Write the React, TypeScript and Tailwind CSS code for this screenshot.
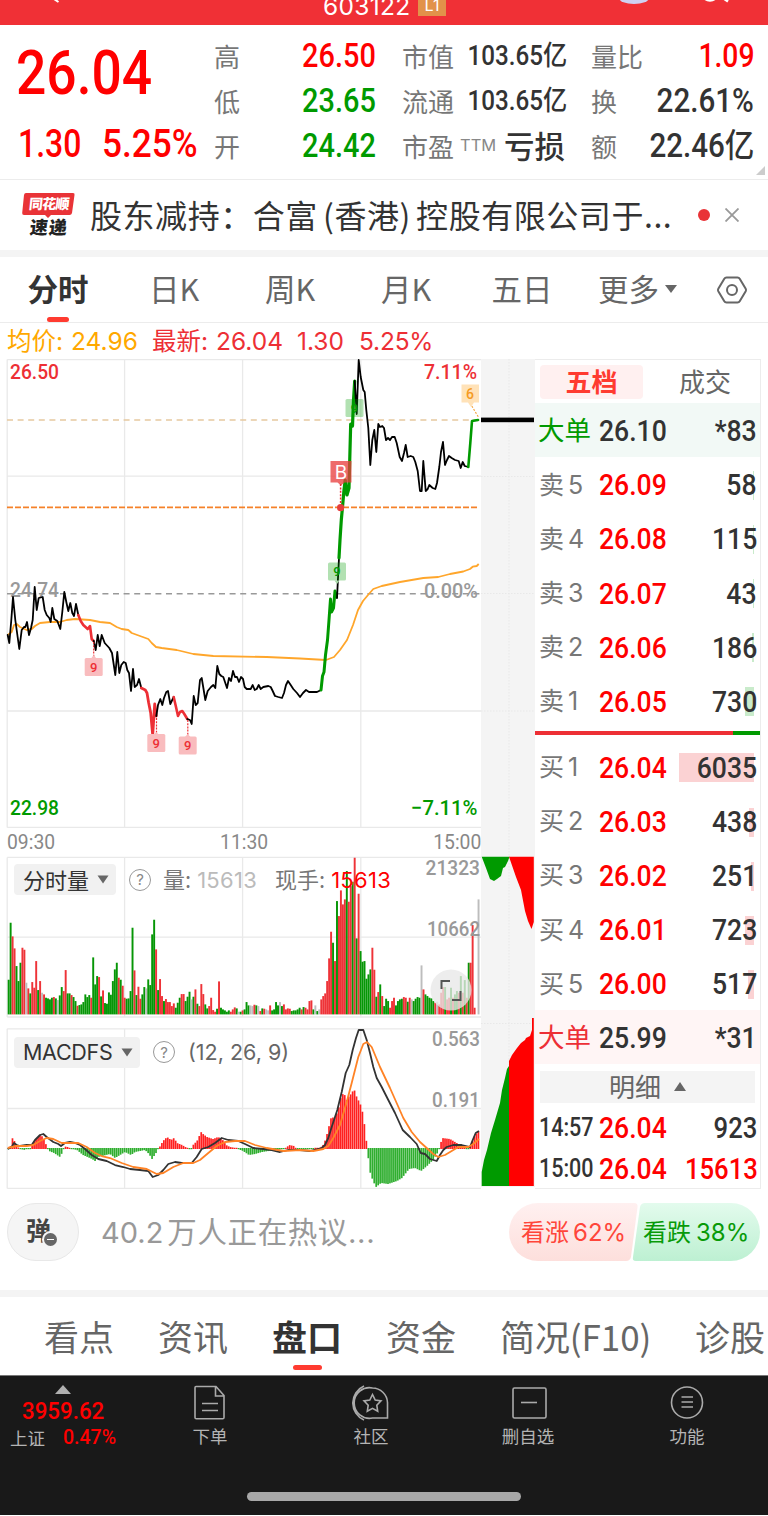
import React from 'react';

type Point = [number, number];

interface OrderRow {
  label: string;
  price: string;
  volume: string;
  depth: number;
}

const SELL_ROWS: OrderRow[] = [
  { label: '卖5', price: '26.09', volume: '58', depth: 1 },
  { label: '卖4', price: '26.08', volume: '115', depth: 1 },
  { label: '卖3', price: '26.07', volume: '43', depth: 1 },
  { label: '卖2', price: '26.06', volume: '186', depth: 2 },
  { label: '卖1', price: '26.05', volume: '730', depth: 9 }
];

const BUY_ROWS: OrderRow[] = [
  { label: '买1', price: '26.04', volume: '6035', depth: 75 },
  { label: '买2', price: '26.03', volume: '438', depth: 5 },
  { label: '买3', price: '26.02', volume: '251', depth: 3 },
  { label: '买4', price: '26.01', volume: '723', depth: 9 },
  { label: '买5', price: '26.00', volume: '517', depth: 6 }
];

const PERIODS = ['分时', '日K', '周K', '月K', '五日'];

// Price line, split into segments by signal colour
const PRICE_SEGMENTS: { color: string; width: number; points: string }[] = [
  {
    color: '#000',
    width: 1.8,
    points:
      '7.7,635 9.3,643 11.3,620 13,597 15.3,620 19.3,649 21.7,630 24,627 25.3,627 27,622 29,635 31,628 32.7,620 34.7,587 36.7,610 38.7,598 42.7,597 44.7,610 46.7,615 49.3,618 50.7,622 52.3,608 54.3,619 57.3,621 60.3,629 62.3,612 64.3,592 66.3,602 68.3,611 70.3,603 72.3,613 74,616 76,604 78.3,615'
  },
  { color: '#ed2f35', width: 2.6, points: '78.3,615 80.7,621 83.3,625 87.7,629 90,626 91.7,639 93.7,641' },
  {
    color: '#000',
    width: 1.8,
    points:
      '93.7,641 95.7,650 97.7,635 99.7,646 101.7,635 104.7,643 109.3,648 112,653 115.3,675 117.3,652 119.3,673 121.3,665 123.7,662 125.7,663 127.3,670 129,673 131,691 133,669 134.7,687 137,685 139,679 141.3,688'
  },
  { color: '#ed2f35', width: 2.8, points: '141.3,688 143.3,689 145.3,690 147,693 148.7,703 150.7,713 152.7,735 154.7,704 156.3,716' },
  { color: '#000', width: 1.8, points: '156.3,716 158,705 160.3,699 162.3,705 164,698 166.3,692 168,691 170.3,704 173.7,697' },
  { color: '#ed2f35', width: 2.6, points: '173.7,697 176,707 178,716 180,712 182.3,711 184.3,714 187.3,719' },
  {
    color: '#000',
    width: 1.8,
    points:
      '187.3,719 190,720 191.7,724 193.7,696 195.7,705 197.7,703 200,680 201.7,678 203.7,690 205.3,700 207.7,691 211,687 213.3,685 215.3,688 217.3,666 219.3,674 221.3,676 223.3,677 227,688 229,678 231,681 233,671 235,677 237,677 239,682 241,677 243,679 244.7,687 246.7,689 250.7,689 252.7,685 254.7,690 256.7,689 258.7,685 260.7,689 263.3,687 268.3,686 270.7,687 272.7,691 275,696 278.3,697 282,698 284,693 286,685 288,681 290.7,685 293.3,689 297,693 300,697 303,693 306,690 309,692 313,692 317,692 321,690'
  },
  {
    color: '#009a00',
    width: 3,
    points: '321,690 322.5,676 324,672 325.5,655 327.5,640 329,620 330.5,599 331.5,612 333.5,608 335,591 336.5,597'
  },
  { color: '#000', width: 1.8, points: '337,598 339,558' },
  {
    color: '#009a00',
    width: 3.2,
    points: '339,558 340,540 341.3,520 342.5,507 344,490 345.2,480 347,495 349,488 350,450 350.7,424 352.5,426 353.5,400 354.7,381'
  },
  {
    color: '#000',
    width: 1.8,
    points:
      '354.7,381 356.7,414 358.7,360 360.7,377 363.3,390 364.7,392 366.3,410 368.3,428 370.3,465 372.3,440 374.3,430 376.3,452 378.3,424 380,427 382.3,426 384,428 386,440 388,438 390,440 392,437 394.7,437 396.7,443 399.7,457 402,461 404,453 405.7,445 407.7,457 410.7,456 413.3,457 415.3,462 417.7,471 420,491 421.7,491 423.3,461 425.7,491 427.7,489 429.3,485 432.7,488 435.3,489 437,483 439.3,467 441,452 443,442 445,465 447,460 449,456 451.7,458 455,460 458.7,461 460.7,468 462.7,462 464.7,466 468.3,467'
  },
  { color: '#009a00', width: 2.6, points: '468.3,467 470.3,443 472,421 478,420' }
];

const AVG_LINE =
  '7.7,635 11.7,632 14,625 16.7,624 20,627 26.7,630 31.7,629 35,626 40,623 50,622 60,622 66.7,620 75,619 90,620 100,622 110,623 116.7,627 121.7,629 128.3,630 131.7,633 140,636 148.3,639 151.7,643 156,647 161.7,648 176.7,650 193.3,654 213.3,656 266.7,657 300,658.5 326,660 334,657 340,650 347,640 353,625 358,610 363,601 368,595 373.3,589 381.7,586 400,582 423.3,578 438.3,577 450,574 463.3,571.5 470,569 472.7,566.7 476.7,566 478.7,564';

// r = rising, g = falling, n = flat; the number is the bar height at 3x
const VOLUME_BARS = (
  'g104 g275 r234 r198 g145 g100 g155 r200 r194 n95 r78 g63 r97 r80 r160 g73 r100 n65 r60 g50 g48 g45 g50 r52 g48 n43 g57 g82 r70 r133 ' +
  'g63 g63 r58 g52 g40 r26 g28 g30 g37 g60 g52 g58 r50 g171 g90 g115 r112 g54 r72 g34 g32 g66 g59 g100 g135 g155 r110 g104 r86 r50 ' +
  'g47 g48 g70 g260 r132 g58 r83 r47 g60 g82 n78 g105 g88 g240 g284 r195 g73 r106 r55 g40 r46 r37 r37 r25 r33 g20 g35 g50 r61 r61 ' +
  'g40 g53 g68 n45 g53 r75 g32 r25 r91 r61 g30 g18 r25 r50 r13 r8 g17 r99 g20 g15 g12 g8 g12 r8 r15 r21 g18 n8 g8 r12 ' +
  'g15 g37 g27 n27 n25 r29 g27 n25 r10 g18 r17 n15 n12 r27 g12 g15 g37 g27 n37 g25 r30 r15 r18 r17 g10 g12 g12 g15 g20 r15 ' +
  'g22 r20 r15 r40 r42 g15 n27 g10 n15 r45 r55 r63 r100 r168 r248 g215 r160 g340 r295 r372 r330 r345 g430 r338 r385 g398 r470 g228 r362 g190 ' +
  'g158 g160 g107 g120 g135 r200 r134 g53 r67 g90 r55 g25 g47 g40 r20 r40 r50 g27 g40 g45 g47 r52 r50 g38 r50 n45 g40 g47 g52 g50 ' +
  'n147 r75 g60 g55 g50 g48 g40 r35 n38 r30 r65 r82 g82 r45 r50 g80 r50 g60 g70 r65 g115 r65 g103 r50 g155 r155 r268 r20 n0 n345'
).split(' ');

const VOLUME_COLORS: Record<string, string> = { r: '#ee3338', g: '#069606', n: '#bdbdbd' };

const MACD_HIST: Point[] = [
  [8, -1], [10, 1], [12.5, 11], [15, 7], [18, 2], [20, -1], [25, -2], [28, 0], [30, -1], [33, 6], [37, 11], [40, 14],
  [43, 12], [47, 2], [49, -3], [54, -5], [60, -9], [62, -5], [63, -1], [66, 3], [69, 1], [72, -1], [77, -2], [83, -7],
  [92, -11], [95, -13], [98, -9], [110, -6], [115, -10], [120, -7], [125, -4], [131, -7], [135, -4], [145, -2],
  [149, -6], [152, -11], [156, -5], [159, 1], [163, 8], [167, 12], [171, 9], [174, 11], [177, 6], [182, 4], [187, 1],
  [191, -1], [193, 4], [197, 8], [201, 17], [203, 15], [207, 12], [213, 10], [218, 12], [222, 10], [226, 4], [230, 2],
  [236, 1], [238, -1], [243, -3], [249, -7], [255, -6], [262, -4], [275, -2], [284, -1], [286, 1], [289, 4], [294, 3],
  [296, 0.6], [300, -1], [310, -1], [320, 1], [324, 5], [327, 15], [331, 31], [335, 32], [338, 38], [341, 52], [344, 57],
  [346, 48], [349, 53], [351, 55], [354, 60], [357, 51], [360, 46], [363, 35], [365, 20], [367, 2], [368, -8],
  [370, -24], [373, -33], [376, -39], [381, -35], [388, -36], [397, -33], [402, -30], [409, -21], [415, -20],
  [421, -23], [427, -18], [433, -12], [438, -4], [440, 3], [442, 11], [450, 10], [455, 7], [460, 4], [465, 1],
  [468, -2], [471, 4], [475, 14], [479, 18]
];

const DIF_LINE =
  '7.7,1149 11.7,1147 14,1143 16.7,1145 20,1146 26.7,1145 31.7,1145 35,1140 40,1135 43.3,1134 46.7,1137 53.3,1142 58.3,1144 61,1146 65,1143 70,1142 75,1143 80,1145 85,1149 91.7,1155 98.3,1159 106.7,1161 115,1165 123.3,1167 130,1169 140,1170 148.3,1171 152.7,1177 158.3,1175 163.3,1170 168.3,1164 175,1162 181.7,1163 191.7,1163 196.7,1157 201.7,1149 208.3,1147 215,1143 221.7,1138 228.3,1140 238.3,1141 245,1144 253.3,1148 263.3,1149 271.7,1150 280,1152 288,1150 300,1150 310,1151 321.7,1148 325,1145 328.3,1138 331.7,1127 337.3,1110 341.7,1092 345.7,1073 349.3,1065 352.7,1050 356,1038 358.7,1030 363.3,1030 366.7,1040 370,1053 373.3,1067 376.7,1078 381.7,1087 388.3,1100 395,1113 402.7,1130 410,1137 416.7,1144 420.7,1153 425,1154 430,1159 436.7,1161 440,1155 443.3,1150 446.7,1147 453.3,1145 461.7,1145 470,1147 472.7,1140 475.7,1133 479,1131';

const DEA_LINE =
  '7.7,1148 16.7,1146 26.7,1146 33.3,1145 40,1141 46.7,1138 53.3,1139 61.7,1143 70,1143 78.3,1143 86.7,1147 95,1153 101.7,1156 110,1158 121.7,1163 133.3,1167 146.7,1169 156.7,1174 163.3,1173 173.3,1167 183.3,1163 193.3,1163 200,1160 208.3,1153 216.7,1146 225,1142 235,1141 245,1141 255,1145 266.7,1148 283.3,1151 300,1150 313.3,1151 323.3,1149 328.3,1146 333.3,1138 340,1125 346.7,1102 351.7,1083 358.3,1057 363.3,1044 367,1042 371.7,1047 380,1067 390,1088 403.3,1118 411.7,1132 420,1142 426.7,1148 433.3,1154 438.3,1157 445,1155 451.7,1151 458.3,1147 468.3,1147 473.3,1144 479,1139';

const valueAt = (points: Point[], x: number) => {
  const next = points.findIndex((p) => p[0] >= x);
  if (next <= 0) return points[next === 0 ? 0 : points.length - 1][1];
  const [x0, y0] = points[next - 1];
  const [x1, y1] = points[next];
  return y0 + ((y1 - y0) * (x - x0)) / (x1 - x0);
};

interface GridProps {
  top: number;
  bottom: number;
  rows: number[];
}

const Grid: React.FC<GridProps> = ({ top, bottom, rows }) => (
  <g stroke="#e9e9e9" strokeWidth="1.3" fill="none">
    <path d={`M7.2 ${top}H481M7.2 ${bottom}H481M7.2 ${top}V${bottom}`} />
    {[124.6, 242.6, 360.8].map((x) => (
      <path key={x} d={`M${x} ${top}V${bottom}`} />
    ))}
    {rows.map((y) => (
      <path key={y} d={`M7 ${y}H481`} />
    ))}
  </g>
);

interface AxisLabelProps {
  x: number;
  y: number;
  width: number;
  color: string;
  size?: number;
  children: string;
}

const AxisLabel: React.FC<AxisLabelProps> = ({ x, y, width, color, size = 21, children }) => (
  <text
    x={x}
    y={y}
    fill={color}
    fontSize={size}
    textLength={width}
    lengthAdjust="spacingAndGlyphs"
    className="font-[Roboto] font-medium"
  >
    {children}
  </text>
);

interface MarkerProps {
  x: number;
  y: number;
  text: string;
  fill: string;
  color: string;
}

const Marker: React.FC<MarkerProps> = ({ x, y, text, fill, color }) => (
  <g>
    <rect x={x - 9} y={y - 9} width="18" height="18" rx="1.5" fill={fill} />
    <text x={x} y={y + 4.5} fill={color} fontSize="13" textAnchor="middle" className="font-[Roboto] font-medium">
      {text}
    </text>
  </g>
);

const PriceChart = () => (
  <svg viewBox="0 359 481 469" className="block w-[481px] h-[469px]">
    <Grid top={359.6} bottom={827.4} rows={[476.2, 711]} />
    <path d="M7 420H480" stroke="#e6c9a0" strokeWidth="1.6" strokeDasharray="6 4.6" />
    <path d="M7 593.8H480" stroke="#999" strokeWidth="1.5" strokeDasharray="6 4.6" />
    <path d="M7 507.4H478" stroke="#f5822a" strokeWidth="1.9" strokeDasharray="6 2" />
    <polyline points={AVG_LINE} fill="none" stroke="#ffa62b" strokeWidth="1.8" strokeLinejoin="round" />
    <AxisLabel x={10} y={597} width={49} color="#999">24.74</AxisLabel>
    <AxisLabel x={424} y={597.5} width={54} color="#999">0.00%</AxisLabel>
    {PRICE_SEGMENTS.map((s) => (
      <polyline
        key={s.points}
        points={s.points}
        fill="none"
        stroke={s.color}
        strokeWidth={s.width}
        strokeLinejoin="round"
        strokeLinecap="round"
      />
    ))}
    <path d="M93.7 642V658M156.5 718V734M187.8 720V738" stroke="#ed2f35" strokeWidth="1.2" strokeDasharray="2 1.2" />
    <path d="M91 658.5L93.7 655L96.4 658.5ZM153.5 735L156.3 732L159 735ZM185 737L187.7 734L190.5 737Z" fill="#f9bcbe" />
    <Marker x={93.7} y={667} text="9" fill="#f9bcbe" color="#ed2f35" />
    <Marker x={156.3} y={743} text="9" fill="#f9bcbe" color="#ed2f35" />
    <Marker x={187.7} y={745.5} text="9" fill="#f9bcbe" color="#ed2f35" />
    <Marker x={337} y={571.5} text="9" fill="rgba(0,154,0,.3)" color="#009a00" />
    <Marker x={354.5} y={408} text="9" fill="rgba(0,154,0,.3)" color="#009a00" />
    <path d="M334.5 580.5L337 584L339.5 580.5Z" fill="#a6d8a6" />
    <path d="M340.6 484V504" stroke="#ed2f35" strokeWidth="1.5" strokeDasharray="2 1.4" />
    <path d="M330.5 461H351.5V482.5H344.5L341 485.5L337.5 482.5H330.5Z" fill="rgba(233,60,60,.76)" />
    <text x="341" y="478.5" fill="#fff" fontSize="19" textAnchor="middle" className="font-[Inter]">
      B
    </text>
    <circle cx="340.6" cy="507.6" r="3.6" fill="#e53d3d" />
    <path d="M470 403L479 418" stroke="#f5a640" strokeWidth="1.2" strokeDasharray="2 1.5" />
    <path d="M461.5 384.5H479V402.5H474L471 407L468 402.5H461.5Z" fill="#ffe2b8" />
    <text x="470" y="398.5" fill="#f59a23" fontSize="14" textAnchor="middle" className="font-[Roboto] font-medium">
      6
    </text>
    <AxisLabel x={10} y={379} width={49} color="#ed2f35">26.50</AxisLabel>
    <AxisLabel x={424} y={379} width={53} color="#ed2f35">7.11%</AxisLabel>
    <AxisLabel x={10} y={815} width={49} color="#009a00">22.98</AxisLabel>
    <AxisLabel x={411} y={815} width={66.5} color="#009a00">−7.11%</AxisLabel>
  </svg>
);

const VolumeChart = () => (
  <svg viewBox="0 856 481 163" className="block w-[481px] h-[163px]">
    <Grid top={857.4} bottom={1017} rows={[937.2]} />
    {VOLUME_BARS.map((bar, i) => {
      const height = Number(bar.slice(1)) / 3;
      return (
        <rect
          key={i}
          x={7.7 + i * 1.966}
          y={1014.4 - height}
          width="1.93"
          height={height}
          fill={VOLUME_COLORS[bar[0]]}
        />
      );
    })}
    <AxisLabel x={425.5} y={875} width={54.5} color="#999">21323</AxisLabel>
    <AxisLabel x={427} y={936} width={53} color="#999">10662</AxisLabel>
    <circle cx="451" cy="990" r="20.5" fill="rgba(232,232,232,.78)" />
    <path d="M441.5 989V981H450M460.5 991V1000H452" fill="none" stroke="#555" strokeWidth="2" />
  </svg>
);

const MacdChart = () => (
  <svg viewBox="0 1028 481 162" className="block w-[481px] h-[162px]">
    <Grid top={1028.8} bottom={1188.4} rows={[1108.5]} />
    {VOLUME_BARS.map((_, i) => {
      const x = 7.7 + i * 1.966;
      const v = valueAt(MACD_HIST, x + 0.8);
      const height = Math.max(Math.abs(v), 1.2);
      return (
        <rect
          key={i}
          x={x}
          y={v > 0 ? 1149 - height : 1148}
          width="1.7"
          height={height}
          fill={v > 0 ? '#ff2020' : '#2fae2f'}
        />
      );
    })}
    <polyline points={DIF_LINE} fill="none" stroke="#333" strokeWidth="1.8" strokeLinejoin="round" />
    <polyline points={DEA_LINE} fill="none" stroke="#ff8326" strokeWidth="1.8" strokeLinejoin="round" />
    <AxisLabel x={432} y={1046} width={48} color="#999">0.563</AxisLabel>
    <AxisLabel x={432} y={1107} width={48} color="#999">0.191</AxisLabel>
  </svg>
);

const DepthPanel = () => (
  <svg viewBox="481 359 54 831" className="block w-[54px] h-[831px] shrink-0">
    <rect x="481" y="359" width="54" height="828" fill="#f4f4f4" />
    <path
      d="M509 359V1187M481 476.5H535M481 593.5H535M481 711H535M481 1023.5H535"
      stroke="#e8e8e8"
      strokeDasharray="1.5 1.5"
    />
    <rect x="481" y="417.6" width="53" height="4.6" fill="#000" />
    <path d="M481.7 856.7H509.5L508 861L505 867L503 868L501 876L497 879L494 881L490 879L486 868Z" fill="#009a00" />
    <path d="M509 856.7H533.8V922L531.5 929L528 921L525 911L521 890L516 877Z" fill="#f00" />
    <path d="M481.7 1186V1172L484 1160L487 1150L491 1133L495 1120L500 1103L502 1090L505 1078L507 1069L509 1066V1186Z" fill="#009a00" />
    <path d="M509 1186V1061L512 1055L517 1048L521 1043L525 1040L526 1038L530 1036L532 1030L532 1018H533.8V1186Z" fill="#f00" />
  </svg>
);

const HelpIcon = () => (
  <span className="flex size-[22px] items-center justify-center rounded-full border-[1.5px] border-[#999] font-[Inter] text-[15px] leading-none text-[#888]">
    ?
  </span>
);

const Caret = () => (
  <svg viewBox="0 0 12 9" className="w-[12px] h-[9px]">
    <path d="M0.5 0.5H11.5L6 8.5Z" fill="#666" />
  </svg>
);

const TopBar = () => (
  <header className="relative h-[25px] shrink-0 overflow-hidden bg-[#f03036]">
    <div className="absolute left-[323px] -top-[9px] flex items-end text-white">
      <span className="w-[95px] font-[Inter] text-[24.500px] leading-[30px] tracking-[.3px]">603122</span>
      <span className="mb-[5px] h-[24px] w-[28px] bg-[#e2924a] text-center font-[Inter] text-[16px] leading-[27px]">L1</span>
    </div>
    <svg viewBox="0 0 768 25" className="absolute inset-0 h-[25px] w-[768px]">
      <path d="M54 -1L58.500 2" stroke="#fff" strokeWidth="2" />
      <ellipse cx="634" cy="-2" rx="15" ry="6" fill="#cfd0f2" />
      <circle cx="710" cy="-7.500" r="8" fill="none" stroke="#fff" strokeWidth="2.500" />
      <path d="M723 -2L728 1.500" stroke="#fff" strokeWidth="2.500" />
    </svg>
  </header>
);

interface QuoteCellProps {
  label: React.ReactNode;
  value: string;
  valueClass: string;
}

const QuoteCell: React.FC<QuoteCellProps> = ({ label, value, valueClass }) => (
  <div className="flex h-[45px] items-center justify-between whitespace-nowrap">
    <span className="-mt-[2px] text-[26px] text-[#777]">{label}</span>
    <span className={`origin-right font-medium ${valueClass}`}>{value}</span>
  </div>
);

const QuotePanel = () => (
  <section className="relative flex h-[155px] shrink-0 border-b border-[#ececec] pt-[9px]">
    <div className="w-[214px] shrink-0 pl-[16px] font-[Roboto] font-medium text-[#f00]">
      <div className="mb-px origin-left scale-x-[.875] text-[61px] leading-[79px]">26.04</div>
      <div className="mt-[2px] flex pl-[2px] text-[38px] leading-[58px]">
        <span className="w-[84px] origin-left scale-x-[.84]">1.30</span>
        <span className="origin-left scale-x-[.925]">5.25%</span>
      </div>
    </div>
    <div className="grid h-[135px] grid-cols-[162px_163px_163px] gap-x-[26px]">
      <QuoteCell label="高" value="26.50" valueClass="scale-x-[.89] font-[Roboto] text-[32.500px] text-[#f00]" />
      <QuoteCell label="市值" value="103.65亿" valueClass="mr-[2px] -mt-px scale-x-[.88] font-[Roboto,'Noto_Sans_CJK_SC'] text-[27.500px] text-[#333]" />
      <QuoteCell label="量比" value="1.09" valueClass="scale-x-[.87] font-[Roboto] text-[32.500px] text-[#f00]" />
      <QuoteCell label="低" value="23.65" valueClass="scale-x-[.89] font-[Roboto] text-[32.500px] text-[#009a00]" />
      <QuoteCell label="流通" value="103.65亿" valueClass="mr-[2px] -mt-px scale-x-[.88] font-[Roboto,'Noto_Sans_CJK_SC'] text-[27.500px] text-[#333]" />
      <QuoteCell label="换" value="22.61%" valueClass="scale-x-[.91] font-[Roboto] text-[32.500px] text-[#333]" />
      <QuoteCell label="开" value="24.42" valueClass="scale-x-[.89] font-[Roboto] text-[32.500px] text-[#009a00]" />
      <QuoteCell
        label={
          <>
            市盈<span className="relative -top-[6px] ml-[6px] font-[Inter] text-[16.500px] text-[#888]">TTM</span>
          </>
        }
        value="亏损"
        valueClass="-mt-[2px] text-[30.500px] text-[#333]"
      />
      <QuoteCell label="额" value="22.46亿" valueClass="-mt-px scale-x-[.91] font-[Roboto,'Noto_Sans_CJK_SC'] text-[32.500px] text-[#333]" />
    </div>
    <svg viewBox="0 0 9 9" className="absolute right-[3px] bottom-[4px] size-[9px]">
      <path d="M9 0V9H0Z" fill="#ccc" />
    </svg>
  </section>
);

const NewsBar = () => (
  <section className="flex h-[70px] shrink-0 items-center">
    <div className="relative ml-[22px] h-[44px] w-[54px]">
      <svg viewBox="0 0 54 44" className="absolute inset-0 h-[44px] w-[54px]">
        <path d="M4 0H51Q53 0 52.500 2L50 20Q49.500 22 47.500 22H29L26 25L23 22H2Q0 22 .2 20L2 2Q2.300 0 4 0Z" fill="#e93337" />
      </svg>
      <div className="relative -skew-x-6 text-center text-[14px] leading-[21px] font-black tracking-[-.8px] text-white">同花顺</div>
      <div className="relative mt-[2px] -skew-x-6 text-center text-[18px] leading-[20px] font-black tracking-[1px] text-[#222]">速递</div>
    </div>
    <div className="-mt-[3px] ml-[14px] w-[590px] text-[32px] tracking-[.55px] whitespace-nowrap text-[#333] [word-spacing:-2.5px]">
      股东减持：合富 (香港) 控股有限公司于...
    </div>
    <span className="ml-[18px] size-[12px] rounded-full bg-[#e93337]" />
    <svg viewBox="0 0 14 14" className="ml-[15px] size-[14px]">
      <path d="M.5 .5L13.500 13.500M13.500 .5L.5 13.500" stroke="#999" strokeWidth="1.800" />
    </svg>
  </section>
);

const PeriodTabs = () => (
  <nav className="flex h-[66px] shrink-0 items-center border-b border-[#ececec] text-[30.5px] text-[#666]">
    {PERIODS.map((p, i) => (
      <div
        key={p}
        className={`relative flex h-full w-[116px] items-center justify-center pb-[1px] ${i === 0 ? 'font-bold text-[#333]' : ''}`}
      >
        {p}
        {i === 0 && <span className="absolute bottom-0 h-[5.500px] w-[22px] rounded-full bg-[#ff3b30]" />}
      </div>
    ))}
    <div className="ml-[18px] flex items-center pb-[1px]">
      更多
      <svg viewBox="0 0 12 8" className="ml-[6px] h-[8px] w-[12px]">
        <path d="M0 0H12L6 8Z" fill="#666" />
      </svg>
    </div>
    <svg viewBox="0 0 32 28" className="ml-[39px] h-[28px] w-[32px]" fill="none" stroke="#666" strokeWidth="2">
      <path d="M10.500 1.500H21.500Q23 1.500 23.700 2.700L29.700 12.700Q30.400 14 29.700 15.300L23.700 25.300Q23 26.500 21.500 26.500H10.500Q9 26.500 8.300 25.300L2.300 15.300Q1.600 14 2.300 12.700L8.300 2.700Q9 1.500 10.500 1.500Z" />
      <circle cx="16" cy="14" r="5" />
    </svg>
  </nav>
);

const QuoteLegend = () => (
  <div className="flex h-[36px] shrink-0 items-center font-[Inter,'Noto_Sans_CJK_SC'] text-[24.500px] whitespace-nowrap text-[#ed2f35]">
    <span className="ml-[7px] w-[145px] text-[#ffa800]">均价:<span className="ml-[8px]">24.96</span></span>
    <span className="w-[145px]">最新:<span className="ml-[8px]">26.04</span></span>
    <span className="w-[62px]">1.30</span>
    <span className="tracking-[-.2px]">5.25%</span>
  </div>
);

const OrderLine: React.FC<{ row: OrderRow; side: 'buy' | 'sell' }> = ({ row, side }) => (
  <div className="relative flex h-[54.200px] items-center pt-[3px] pr-[3px] pl-[4px] font-[Roboto] text-[29.500px] font-medium">
    <span
      className={`absolute top-[14px] right-[6px] h-[29px] ${side === 'buy' ? 'bg-[#fbd2d3]' : 'bg-[#c9ebcb]'}`}
      style={{ width: row.depth }}
    />
    <span className="relative w-[60px] font-[Inter,'Noto_Sans_CJK_SC'] text-[25px] font-normal text-[#777]">
      {row.label[0]}
      <span className="ml-[4px]">{row.label[1]}</span>
    </span>
    <span className="relative origin-left scale-x-[.9] text-[#f00]">{row.price}</span>
    <span className="relative ml-auto origin-right scale-x-[.9] text-[#333]">{row.volume}</span>
  </div>
);

const BigOrder: React.FC<{ side: 'buy' | 'sell'; price: string; volume: string }> = ({ side, price, volume }) => (
  <div
    className={`flex h-[54px] items-center pt-[3px] pr-[3px] pl-[3px] font-[Roboto] text-[29.500px] font-medium text-[#333] ${
      side === 'buy' ? 'bg-[#fff5f5]' : 'bg-[#f2f9f6]'
    }`}
  >
    <span
      className={`-mt-[5px] w-[61px] font-['Noto_Sans_CJK_SC'] text-[26.500px] font-normal ${side === 'buy' ? 'text-[#ed2f35]' : 'text-[#009a00]'}`}
    >
      大单
    </span>
    <span className="origin-left scale-x-[.9]">{price}</span>
    <span className="ml-auto origin-right scale-x-[.9]">{volume}</span>
  </div>
);

const Trade: React.FC<{ time: string; volume: string; hot?: boolean }> = ({ time, volume, hot }) => (
  <div className="flex h-[41px] items-center pt-[3px] pr-[3px] pl-[4px] font-[Roboto] text-[29.500px] font-medium whitespace-nowrap">
    <span className="w-[60px] origin-left scale-x-[.86] text-[25px] text-[#333]">{time}</span>
    <span className="origin-left scale-x-[.9] text-[#f00]">26.04</span>
    <span className={`ml-auto origin-right scale-x-[.87] ${hot ? 'text-[#f00]' : 'text-[#333]'}`}>{volume}</span>
  </div>
);

const OrderBook = () => (
  <aside className="flex h-[830px] w-[226px] shrink-0 flex-col border-t border-r border-b border-[#ececec]">
    <div className="flex h-[43px] shrink-0 items-center text-[26px]">
      <span className="ml-[5px] flex h-[34px] w-[103px] items-center justify-center rounded bg-[#fff0f0] pb-[3px] font-bold text-[#ff3b30]">
        五档
      </span>
      <span className="-mt-[3px] ml-[36px] text-[#666]">成交</span>
    </div>
    <BigOrder side="sell" price="26.10" volume="*83" />
    {SELL_ROWS.map((row) => (
      <OrderLine key={row.label} row={row} side="sell" />
    ))}
    <div className="mt-[4px] mb-[4px] flex h-[4px] shrink-0 bg-[#009a00]">
      <span className="w-[198px] bg-[#ed2f35]" />
    </div>
    {BUY_ROWS.map((row) => (
      <OrderLine key={row.label} row={row} side="buy" />
    ))}
    <BigOrder side="buy" price="25.99" volume="*31" />
    <div className="mx-[5px] mt-[7px] mb-[3px] flex h-[32px] shrink-0 items-center justify-center bg-[#f4f4f4] text-[26px] text-[#666]">
      <span className="-mt-[2px]">明细</span>
      <svg viewBox="0 0 12 9" className="ml-[13px] h-[9px] w-[12px]">
        <path d="M0 9H12L6 0Z" fill="#666" />
      </svg>
    </div>
    <Trade time="14:57" volume="923" />
    <Trade time="15:00" volume="15613" hot />
  </aside>
);

const ChartArea = () => (
  <section className="flex h-[831px] shrink-0">
    <div className="w-[481px] shrink-0">
      <PriceChart />
      <div className="flex h-[28px] items-center justify-between pt-[2px] pl-[7px] font-[Roboto] text-[21px] text-[#888]">
        <span className="origin-left scale-x-[.92]">09:30</span>
        <span className="scale-x-[.92]">11:30</span>
        <span className="origin-right scale-x-[.92]">15:00</span>
      </div>
      <div className="relative h-[163px]">
        <div className="absolute top-[8px] left-[14px] flex h-[31px] items-center text-[22px] leading-[28px] whitespace-nowrap text-[#333]">
          <div className="flex h-[31px] w-[102px] items-center justify-between rounded bg-[#f1f1f1] pr-[7px] pl-[9px]">
            <span className="-mt-[2px]">分时量</span>
            <Caret />
          </div>
          <span className="ml-[13px]">
            <HelpIcon />
          </span>
          <span className="-mt-[2px] ml-[12px] flex w-[112px] text-[#777]">
            量:<span className="mt-[2px] ml-[6px] font-[Inter] text-[22px] tracking-[.3px] text-[#bbb]">15613</span>
          </span>
          <span className="-mt-[2px] flex text-[#777]">
            现手:<span className="mt-[2px] ml-[6px] font-[Inter] text-[22px] tracking-[.3px] text-[#f00]">15613</span>
          </span>
        </div>
        <VolumeChart />
      </div>
      <div className="relative mt-[9px]">
        <div className="absolute top-[8px] left-[14px] flex items-center font-[Inter] text-[21.500px] whitespace-nowrap text-[#333]">
          <div className="flex h-[31px] w-[126px] items-center justify-between rounded bg-[#f1f1f1] pr-[7px] pl-[9px]">
            <span className="tracking-[-.3px]">MACDFS</span>
            <Caret />
          </div>
          <span className="ml-[13px]">
            <HelpIcon />
          </span>
          <span className="ml-[13px] text-[#666]">(12, 26, 9)</span>
        </div>
        <MacdChart />
      </div>
    </div>
    <DepthPanel />
    <OrderBook />
  </section>
);

const DiscussBar = () => (
  <section className="flex h-[100px] shrink-0 items-start pt-[13px]">
    <div className="relative ml-[7px] flex h-[58px] w-[72px] items-center justify-center rounded-full border border-[#e8e8e8] bg-[#f5f5f5]">
      <span className="-mt-[4px] -ml-[9px] text-[25px] font-bold text-[#444]">弹</span>
      <span className="absolute top-[29px] left-[36px] flex size-[13px] items-center justify-center rounded-full bg-[#666] ring-2 ring-[#f5f5f5]">
        <span className="h-[1.500px] w-[7px] bg-white" />
      </span>
    </div>
    <div className="ml-[22px] w-[408px] font-[Inter,'Noto_Sans_CJK_SC'] text-[29px] leading-[59px] whitespace-nowrap text-[#999]">
      40.2<span className="ml-[4px] text-[29.500px] tracking-[.6px]">万人正在热议...</span>
    </div>
    <div className="relative h-[58px] w-[252px]">
      <svg viewBox="0 0 252 58" className="absolute inset-0 h-[58px] w-[252px]">
        <defs>
          <linearGradient id="rise" x2="0" y2="1">
            <stop stopColor="#fff0f0" />
            <stop offset="1" stopColor="#fddfdc" />
          </linearGradient>
          <linearGradient id="fall" x2="0" y2="1">
            <stop stopColor="#e3fbed" />
            <stop offset="1" stopColor="#bdf0d2" />
          </linearGradient>
        </defs>
        <path d="M29 0H125Q129 0 128.500 4L122 54Q121 58 117 58H29A29 29 0 0 1 29 0Z" fill="url(#rise)" />
        <path d="M136 0H222A29 29 0 0 1 222 58H127Q123 58 124 54L131 4Q132 0 136 0Z" fill="url(#fall)" />
      </svg>
      <div className="relative flex font-[Inter,'Noto_Sans_CJK_SC'] text-[24px] leading-[59px] whitespace-nowrap">
        <span className="ml-[12px] w-[122px] text-[#ff453a]">看涨<span className="ml-[4px]">62%</span></span>
        <span className="text-[#089a08]">看跌<span className="ml-[5px]">38%</span></span>
      </div>
    </div>
  </section>
);

const SectionTabs = () => (
  <nav className="flex h-[78px] shrink-0 items-center gap-[44px] overflow-hidden pl-[44px] text-[35px] whitespace-nowrap text-[#666]">
    <span>看点</span>
    <span>资讯</span>
    <span className="relative flex h-full items-center justify-center font-bold text-[#333]">
      盘口
      <span className="absolute bottom-[5px] h-[5.500px] w-[29px] rounded-full bg-[#ff3b30]" />
    </span>
    <span>资金</span>
    <span className="w-[151px] tracking-[-.1px]">简况(F10)</span>
    <span>诊股</span>
  </nav>
);

interface NavItemProps {
  label: string;
  className: string;
  children: React.ReactNode;
}

const NavItem: React.FC<NavItemProps> = ({ label, className, children }) => (
  <div className={`flex flex-col items-center ${className}`}>
    <svg viewBox="0 0 38 38" className="size-[38px]" fill="none" stroke="#aaa" strokeWidth="1.600">
      {children}
    </svg>
    <span className="text-[17.500px] leading-[27px] text-[#b4b4b4]">{label}</span>
  </div>
);

const BottomNav = () => (
  <footer className="flex h-[140px] shrink-0 flex-col border-t border-[#777] bg-[#191919]">
    <div className="flex h-[100px] pt-[8px]">
      <div className="w-[126px] shrink-0 font-[Roboto] text-[#f00]">
        <svg viewBox="0 0 16 9" className="mt-[1px] ml-[55px] h-[9px] w-[16px]">
          <path d="M0 9H16L8 0Z" fill="#b0b0b0" />
        </svg>
        <div className="mt-[3px] ml-[22px] origin-left scale-x-[.91] text-[24.500px] leading-[28px] font-medium">3959.62</div>
        <div className="ml-[10px] flex items-center text-[19.500px] leading-[26px] font-medium">
          <span className="w-[53px] font-['Noto_Sans_CJK_SC'] text-[17.500px] font-normal text-[#b4b4b4]">上证</span>
          <span>0.47%</span>
        </div>
      </div>
      <NavItem label="下单" className="ml-[24px] w-[120px]">
        <path d="M5 2.500H25L33 11.500V33.500Q33 34.800 31.700 34.800H5.300Q4 34.800 4 33.500V3.800Q4 2.500 5 2.500ZM24.500 2.500V12H33M11 19.500H27M11 26.500H27" />
      </NavItem>
      <NavItem label="社区" className="ml-[43px] w-[116px]">
        <path d="M20.500 4A15.300 15.300 0 1 0 20.500 34H35.500V18.500A15.300 15.300 0 0 0 20.500 4ZM12 2A18.500 18.500 0 0 0 12 36" />
        <path d="M20.500 10.500L23.200 16L29 16.900L24.800 21.200L25.700 27.200L20.500 24.300L15.300 27.200L16.200 21.200L12 16.900L17.800 16Z" />
      </NavItem>
      <NavItem label="删自选" className="ml-[41px] w-[116px]">
        <rect x="4" y="4" width="33" height="30" rx="1.500" />
        <path d="M12 18.500H28" />
      </NavItem>
      <NavItem label="功能" className="ml-[43px] w-[116px]">
        <circle cx="19" cy="18.500" r="15.500" />
        <path d="M13.500 13H25M13.500 18H25M13.500 23H25" />
      </NavItem>
    </div>
    <div className="mt-[16px] ml-[247px] h-[9px] w-[274px] rounded-full bg-[#a8a8a8]" />
  </footer>
);

const App = () => (
  <main className="flex h-[1516px] w-[768px] flex-col overflow-hidden bg-white font-['Noto_Sans_CJK_SC',sans-serif]">
    <TopBar />
    <QuotePanel />
    <NewsBar />
    <div className="h-[7px] shrink-0 bg-[#f4f4f4]" />
    <PeriodTabs />
    <QuoteLegend />
    <ChartArea />
    <DiscussBar />
    <div className="h-[7px] shrink-0 bg-[#f4f4f4]" />
    <SectionTabs />
    <BottomNav />
  </main>
);

export default App;
